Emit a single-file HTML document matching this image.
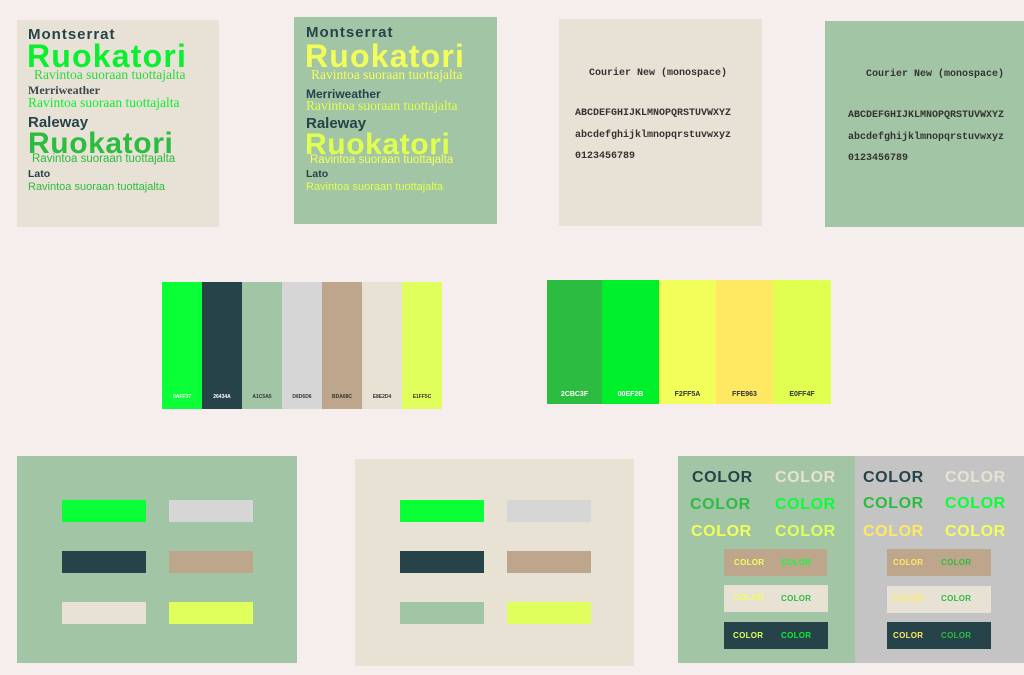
<!DOCTYPE html>
<html><head><meta charset="utf-8"><style>
*{margin:0;padding:0;box-sizing:border-box}
body{width:1024px;height:675px;background:#f5eeec;position:relative;overflow:hidden;font-family:"Liberation Sans",sans-serif}
.a{position:absolute}
.t{position:absolute;white-space:nowrap;line-height:1}
.b{font-weight:bold}
.s{font-family:"Liberation Serif",serif}
.m{font-family:"Liberation Mono",monospace;font-size:10px;color:#333;font-weight:bold}
.c{font-weight:bold;font-size:16px;letter-spacing:0.6px}
.c2{font-weight:bold;font-size:8px;letter-spacing:0.3px}
.mo{letter-spacing:1px}
.rk{font-size:32px;letter-spacing:1.2px}
.rk2{font-size:30px;letter-spacing:0.6px}
</style></head><body>
<!-- card 1 -->
<div class="a" style="left:17px;top:20px;width:202px;height:207px;background:#e8e1d5"></div>
<div class="t b mo" style="left:28px;top:27px;font-size:15px;color:#26434a">Montserrat</div>
<div class="t b rk" style="left:27px;top:40px;color:#0aef2f">Ruokatori</div>
<div class="t s" style="left:34px;top:68px;font-size:13.5px;color:#2cd83f">Ravintoa suoraan tuottajalta</div>
<div class="t s b" style="left:28px;top:84px;font-size:12px;color:#3a4a4a">Merriweather</div>
<div class="t s" style="left:28px;top:96px;font-size:13.5px;color:#0aef2f">Ravintoa suoraan tuottajalta</div>
<div class="t b" style="left:28px;top:115px;font-size:15px;color:#26434a">Raleway</div>
<div class="t b rk2" style="left:28px;top:129px;color:#2cbc3f">Ruokatori</div>
<div class="t" style="left:32px;top:154px;font-size:11.5px;color:#2cbc3f">Ravintoa suoraan tuottajalta</div>
<div class="t b" style="left:28px;top:169px;font-size:10.5px;color:#26434a">Lato</div>
<div class="t" style="left:28px;top:182px;font-size:11px;color:#2cbc3f">Ravintoa suoraan tuottajalta</div>
<!-- card 2 -->
<div class="a" style="left:294px;top:17px;width:203px;height:207px;background:#a2c5a5"></div>
<div class="t b mo" style="left:306px;top:25px;font-size:15px;color:#26434a">Montserrat</div>
<div class="t b rk" style="left:305px;top:40px;color:#f2ff5a">Ruokatori</div>
<div class="t s" style="left:311px;top:68px;font-size:13.5px;color:#f2ff5a">Ravintoa suoraan tuottajalta</div>
<div class="t b" style="left:306px;top:88px;font-size:12px;color:#26434a">Merriweather</div>
<div class="t s" style="left:306px;top:99px;font-size:13.5px;color:#e0ff4f">Ravintoa suoraan tuottajalta</div>
<div class="t b" style="left:306px;top:116px;font-size:15px;color:#26434a">Raleway</div>
<div class="t b rk2" style="left:305px;top:130px;color:#e0ff4f">Ruokatori</div>
<div class="t" style="left:310px;top:155px;font-size:11.5px;color:#f2ff5a">Ravintoa suoraan tuottajalta</div>
<div class="t b" style="left:306px;top:169px;font-size:10.5px;color:#26434a">Lato</div>
<div class="t" style="left:306px;top:182px;font-size:11px;color:#e0ff4f">Ravintoa suoraan tuottajalta</div>
<!-- card 3 -->
<div class="a" style="left:559px;top:19px;width:203px;height:207px;background:#e8e1d5"></div>
<div class="t m" style="left:589px;top:69px">Courier New (monospace)</div>
<div class="t m" style="left:575px;top:109px">ABCDEFGHIJKLMNOPQRSTUVWXYZ</div>
<div class="t m" style="left:575px;top:131px">abcdefghijklmnopqrstuvwxyz</div>
<div class="t m" style="left:575px;top:152px">0123456789</div>
<!-- card 4 -->
<div class="a" style="left:825px;top:21px;width:199px;height:206px;background:#a2c5a5"></div>
<div class="t m" style="left:866px;top:70px">Courier New (monospace)</div>
<div class="t m" style="left:848px;top:111px">ABCDEFGHIJKLMNOPQRSTUVWXYZ</div>
<div class="t m" style="left:848px;top:133px">abcdefghijklmnopqrstuvwxyz</div>
<div class="t m" style="left:848px;top:154px">0123456789</div>
<!-- palette 1 -->
<div class="a" style="left:162px;top:282px;width:280px;height:127px;display:flex;font-size:5px;font-weight:bold">
<div style="flex:1;background:#0aff37;color:#fff;text-align:center;padding-top:112px">0AFF37</div>
<div style="flex:1;background:#26434a;color:#fff;text-align:center;padding-top:112px">26434A</div>
<div style="flex:1;background:#a1c5a5;color:#333;text-align:center;padding-top:112px">A1C5A5</div>
<div style="flex:1;background:#d6d6d6;color:#333;text-align:center;padding-top:112px">D6D6D6</div>
<div style="flex:1;background:#bda68c;color:#333;text-align:center;padding-top:112px">BDA68C</div>
<div style="flex:1;background:#e8e2d4;color:#333;text-align:center;padding-top:112px">E8E2D4</div>
<div style="flex:1;background:#e1ff5c;color:#333;text-align:center;padding-top:112px">E1FF5C</div>
</div>
<!-- palette 2 -->
<div class="a" style="left:547px;top:280px;width:284px;height:124px;display:flex;font-size:7px;font-weight:bold">
<div style="width:55px;background:#2cbc3f;color:#fff;text-align:center;padding-top:111px">2CBC3F</div>
<div style="width:57px;background:#00ef2b;color:#fff;text-align:center;padding-top:111px">00EF2B</div>
<div style="width:57px;background:#f2ff5a;color:#333;text-align:center;padding-top:111px">F2FF5A</div>
<div style="width:57px;background:#ffe963;color:#333;text-align:center;padding-top:111px">FFE963</div>
<div style="width:58px;background:#e0ff4f;color:#333;text-align:center;padding-top:111px">E0FF4F</div>
</div>
<!-- bottom A -->
<div class="a" style="left:17px;top:456px;width:280px;height:207px;background:#a2c5a5"></div>
<div class="a" style="left:62px;top:500px;width:84px;height:22px;background:#0aff37"></div>
<div class="a" style="left:169px;top:500px;width:84px;height:22px;background:#d6d6d6"></div>
<div class="a" style="left:62px;top:551px;width:84px;height:22px;background:#26434a"></div>
<div class="a" style="left:169px;top:551px;width:84px;height:22px;background:#bda68c"></div>
<div class="a" style="left:62px;top:602px;width:84px;height:22px;background:#e8e2d4"></div>
<div class="a" style="left:169px;top:602px;width:84px;height:22px;background:#e1ff5c"></div>
<!-- bottom B -->
<div class="a" style="left:355px;top:459px;width:279px;height:207px;background:#e8e2d4"></div>
<div class="a" style="left:400px;top:500px;width:84px;height:22px;background:#0aff37"></div>
<div class="a" style="left:507px;top:500px;width:84px;height:22px;background:#d6d6d6"></div>
<div class="a" style="left:400px;top:551px;width:84px;height:22px;background:#26434a"></div>
<div class="a" style="left:507px;top:551px;width:84px;height:22px;background:#bda68c"></div>
<div class="a" style="left:400px;top:602px;width:84px;height:22px;background:#a2c5a5"></div>
<div class="a" style="left:507px;top:602px;width:84px;height:22px;background:#e1ff5c"></div>
<!-- bottom C -->
<div class="a" style="left:678px;top:456px;width:177px;height:207px;background:#a2c5a5"></div>
<div class="a" style="left:855px;top:456px;width:169px;height:207px;background:#c4c4c4"></div>
<div class="t c" style="left:692px;top:470px;color:#26434a">COLOR</div>
<div class="t c" style="left:775px;top:470px;color:#e8e2d4">COLOR</div>
<div class="t c" style="left:690px;top:497px;color:#2cbc3f">COLOR</div>
<div class="t c" style="left:775px;top:497px;color:#0aff37">COLOR</div>
<div class="t c" style="left:691px;top:524px;color:#f2ff5a">COLOR</div>
<div class="t c" style="left:775px;top:524px;color:#e1ff5c">COLOR</div>
<div class="t c" style="left:863px;top:470px;color:#26434a">COLOR</div>
<div class="t c" style="left:945px;top:470px;color:#e8e2d4">COLOR</div>
<div class="t c" style="left:863px;top:496px;color:#2cbc3f">COLOR</div>
<div class="t c" style="left:945px;top:496px;color:#0aff37">COLOR</div>
<div class="t c" style="left:863px;top:524px;color:#ffe963">COLOR</div>
<div class="t c" style="left:945px;top:524px;color:#f2ff5a">COLOR</div>
<div class="a" style="left:724px;top:549px;width:103px;height:27px;background:#bda68c"></div>
<div class="a" style="left:724px;top:585px;width:104px;height:27px;background:#e8e2d4"></div>
<div class="a" style="left:724px;top:622px;width:104px;height:27px;background:#26434a"></div>
<div class="t c2" style="left:734px;top:559px;color:#f2ff5a">COLOR</div>
<div class="t c2" style="left:781px;top:559px;color:#0aff37">COLOR</div>
<div class="t c2" style="left:734px;top:594px;color:#f2ff5a">COLOR</div>
<div class="t c2" style="left:781px;top:595px;color:#2cbc3f">COLOR</div>
<div class="t c2" style="left:733px;top:632px;color:#e1ff5c">COLOR</div>
<div class="t c2" style="left:781px;top:632px;color:#0aef2f">COLOR</div>
<div class="a" style="left:887px;top:549px;width:104px;height:27px;background:#bda68c"></div>
<div class="a" style="left:887px;top:586px;width:104px;height:27px;background:#e8e2d4"></div>
<div class="a" style="left:887px;top:622px;width:104px;height:27px;background:#26434a"></div>
<div class="t c2" style="left:893px;top:559px;color:#ffe963">COLOR</div>
<div class="t c2" style="left:941px;top:559px;color:#2cbc3f">COLOR</div>
<div class="t c2" style="left:893px;top:595px;color:#ffe963">COLOR</div>
<div class="t c2" style="left:941px;top:595px;color:#2cbc3f">COLOR</div>
<div class="t c2" style="left:893px;top:632px;color:#ffe963">COLOR</div>
<div class="t c2" style="left:941px;top:632px;color:#2cbc3f">COLOR</div>
</body></html>
